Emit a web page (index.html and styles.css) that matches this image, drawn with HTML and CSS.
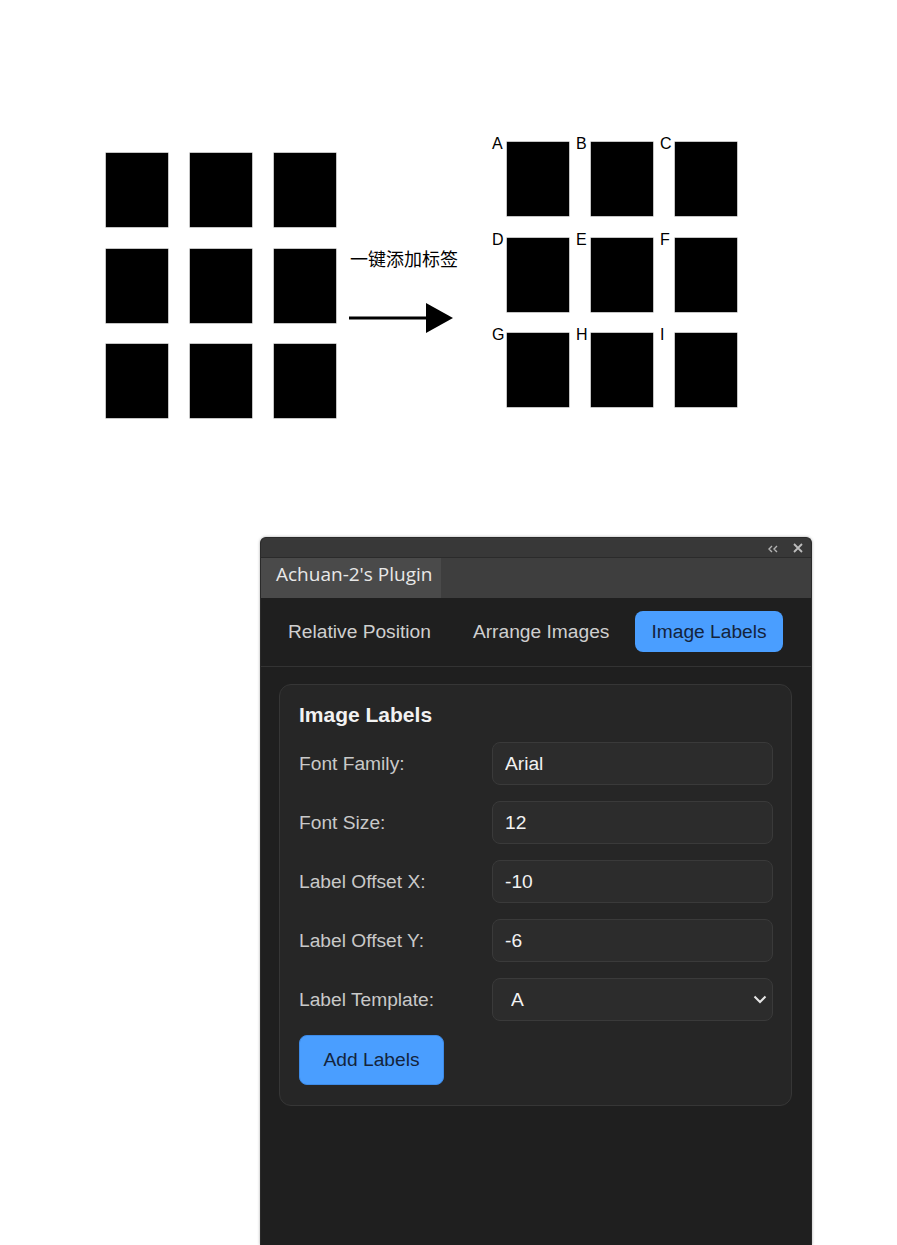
FILE: index.html
```html
<!DOCTYPE html>
<html lang="zh">
<head>
<meta charset="utf-8">
<title>Image Labels</title>
<link rel="stylesheet" href="styles.css">
</head>
<body>
<div class="figure">
  <div class="grid grid-left">
    <div class="sq"></div><div class="sq"></div><div class="sq"></div>
    <div class="sq"></div><div class="sq"></div><div class="sq"></div>
    <div class="sq"></div><div class="sq"></div><div class="sq"></div>
  </div>
  <div class="middle">
    <div class="caption">一键添加标签</div>
    <svg class="arrow" width="104" height="30" viewBox="0 0 104 30">
      <rect x="0" y="13.5" width="78" height="3" fill="#000"/>
      <polygon points="77,0 104,15 77,30" fill="#000"/>
    </svg>
  </div>
  <div class="grid grid-right">
    <div class="sq"><span class="lbl">A</span></div>
    <div class="sq"><span class="lbl">B</span></div>
    <div class="sq"><span class="lbl">C</span></div>
    <div class="sq"><span class="lbl">D</span></div>
    <div class="sq"><span class="lbl">E</span></div>
    <div class="sq"><span class="lbl">F</span></div>
    <div class="sq"><span class="lbl">G</span></div>
    <div class="sq"><span class="lbl">H</span></div>
    <div class="sq"><span class="lbl">I</span></div>
  </div>
</div>

<div class="panel">
  <div class="topbar">
    <svg class="ic-collapse" width="10" height="8" viewBox="0 0 10 8">
      <path d="M4 1 L1 4 L4 7 M9 1 L6 4 L9 7" fill="none" stroke="#b4b4b4" stroke-width="1.4"/>
    </svg>
    <svg class="ic-close" width="10" height="10" viewBox="0 0 10 10">
      <path d="M1 1 L9 9 M9 1 L1 9" fill="none" stroke="#bdbdbd" stroke-width="1.8"/>
    </svg>
  </div>
  <div class="strip">
    <div class="strip-tab">Achuan-2's Plugin</div>
  </div>
  <div class="content">
    <div class="tabs">
      <button class="tab">Relative Position</button>
      <button class="tab">Arrange Images</button>
      <button class="tab tab-active">Image Labels</button>
    </div>
    <div class="body">
      <div class="card">
        <h3 class="card-title">Image Labels</h3>
        <div class="form">
          <label class="f-label">Font Family:</label>
          <input class="f-input" type="text" value="Arial">
          <label class="f-label">Font Size:</label>
          <input class="f-input" type="text" value="12">
          <label class="f-label">Label Offset X:</label>
          <input class="f-input" type="text" value="-10">
          <label class="f-label">Label Offset Y:</label>
          <input class="f-input" type="text" value="-6">
          <label class="f-label">Label Template:</label>
          <div class="select-wrap">
            <select class="f-select"><option>A</option></select>
            <svg class="chev" width="14" height="9" viewBox="0 0 14 9">
              <path d="M1.5 1.5 L7 7 L12.5 1.5" fill="none" stroke="#e6e6e6" stroke-width="2"/>
            </svg>
          </div>
        </div>
        <button class="add-btn">Add Labels</button>
      </div>
    </div>
  </div>
</div>
</body>
</html>
```

FILE: styles.css
```css
html, body {
  margin: 0;
  padding: 0;
  background: #fff;
  overflow: hidden;
}

body {
  font-family: "Liberation Sans", Arial, sans-serif;
}

/* ---------- top figure ---------- */
.figure {
  height: 537px;
  display: flex;
  align-items: flex-start;
}

.grid {
  display: grid;
  grid-template-columns: repeat(3, 62px);
  grid-auto-rows: 74px;
  column-gap: 22px;
  row-gap: 21.5px;
}

.grid-left {
  margin-left: 106px;
  margin-top: 153px;
}

.grid-right {
  margin-left: 54px;
  margin-top: 142px;
}

.sq {
  background: #000;
  position: relative;
  box-shadow: 0 0 0 0.5px #8a8a8a;
}

.lbl {
  position: absolute;
  left: -15px;
  top: -6px;
  font-family: "Liberation Sans", Arial, sans-serif;
  font-size: 16px;
  line-height: 1;
  color: #000;
}

.middle {
  margin-left: 13px;
  margin-top: 248px;
  display: flex;
  flex-direction: column;
  width: 104px;
}

.caption {
  font-family: "Noto Sans CJK SC", sans-serif;
  font-size: 18px;
  line-height: 20px;
  color: #000;
  margin-left: 1px;
  white-space: nowrap;
}

.arrow {
  display: block;
  margin-top: 35px;
}

/* ---------- panel ---------- */
.panel {
  margin-left: 260px;
  width: 552px;
  height: 708px;
  box-sizing: border-box;
  border: 1px solid #2a2a2a;
  border-bottom: none;
  border-radius: 6px 6px 0 0;
  background: #1f1f1f;
  box-shadow: 0 0 3px rgba(0, 0, 0, 0.35);
  display: flex;
  flex-direction: column;
  overflow: hidden;
}

.topbar {
  height: 19px;
  background: #383838;
  display: flex;
  align-items: center;
  justify-content: flex-end;
  gap: 15px;
  padding-right: 8px;
}

.ic-collapse {
  margin-top: 2px;
}

.strip {
  height: 40px;
  border-top: 1px solid #2b2b2b;
  background: #3e3e3e;
  display: flex;
}

.strip-tab {
  width: 180px;
  box-sizing: border-box;
  background: #4a4a4a;
  padding: 0 0 8px 15px;
  display: flex;
  align-items: center;
  font-family: "Open Sans", "Noto Sans", sans-serif;
  font-size: 19px;
  color: #e8e8e8;
}

.content {
  flex: 1;
  background: #1f1f1f;
}

.tabs {
  display: flex;
  gap: 10px;
  padding: 13px 11px 14px;
  border-bottom: 1px solid #333333;
}

.tab {
  height: 41px;
  padding: 0 16px;
  border: none;
  border-radius: 8px;
  background: transparent;
  color: #cfcfcf;
  font-family: "Liberation Sans", Arial, sans-serif;
  font-size: 19.2px;
  cursor: pointer;
}

.tab-active {
  background: #4a9eff;
  color: #14243c;
}

.body {
  padding: 17px 19px 0 18px;
}

.card {
  background: #262626;
  border: 1px solid #363636;
  border-radius: 12px;
  padding: 18px 18px 20px 19px;
}

.card-title {
  margin: 0 0 15px;
  font-family: "Liberation Sans", Arial, sans-serif;
  font-size: 21px;
  font-weight: bold;
  line-height: 24px;
  color: #f2f2f2;
}

.form {
  display: grid;
  grid-template-columns: 193px 1fr;
  grid-auto-rows: 43px;
  row-gap: 16px;
  align-items: center;
}

.f-label {
  font-size: 19.2px;
  color: #c9c9c9;
}

.f-input,
.f-select {
  height: 43px;
  width: 100%;
  box-sizing: border-box;
  background: #2c2c2c;
  border: 1px solid #3a3a3a;
  border-radius: 8px;
  padding: 0 12px;
  font-family: "Liberation Sans", Arial, sans-serif;
  font-size: 19.2px;
  color: #f2f2f2;
  outline: none;
}

.select-wrap {
  position: relative;
  height: 43px;
}

.f-select {
  appearance: none;
  -webkit-appearance: none;
  padding-left: 18px;
}

.chev {
  position: absolute;
  right: 6px;
  top: 17px;
}

.add-btn {
  margin-top: 14px;
  width: 145px;
  height: 50px;
  border: 1px solid #3d8ae6;
  border-radius: 8px;
  background: #4a9eff;
  color: #14243c;
  font-family: "Liberation Sans", Arial, sans-serif;
  font-size: 19.2px;
  cursor: pointer;
}
```
